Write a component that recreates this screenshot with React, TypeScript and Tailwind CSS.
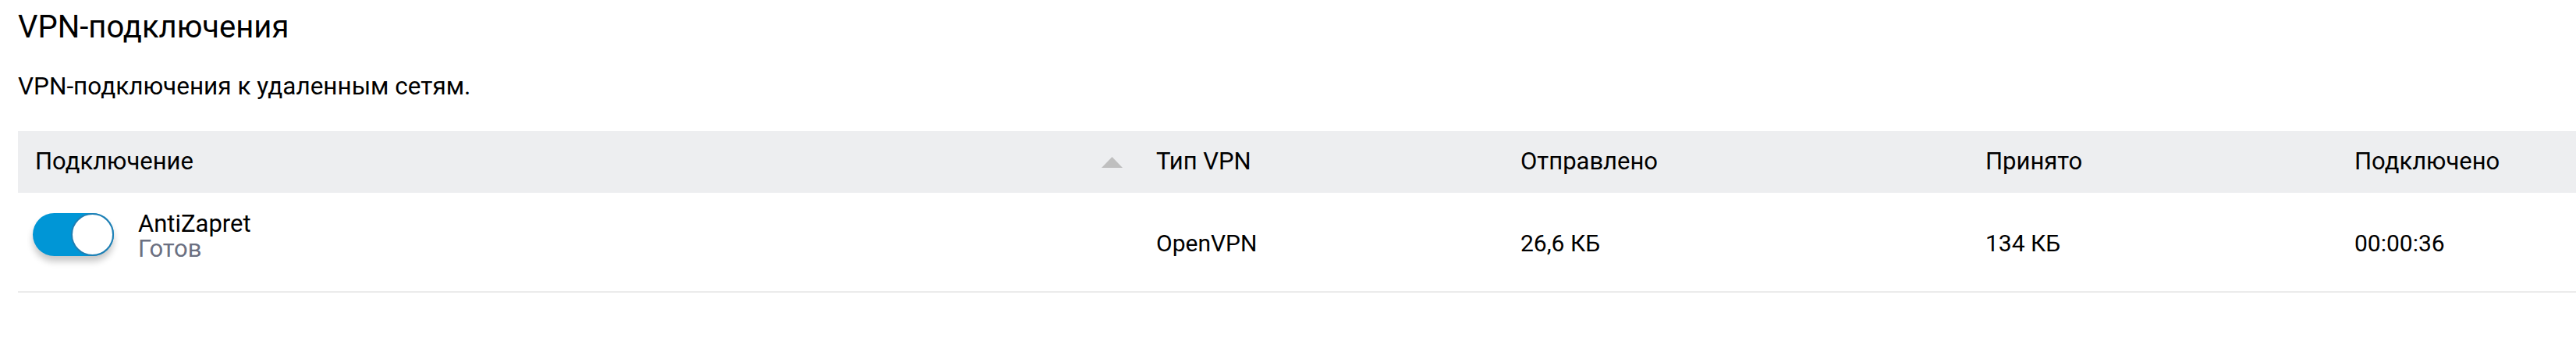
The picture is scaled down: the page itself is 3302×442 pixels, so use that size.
import React from "react";

interface VpnConnection {
  id: string;
  name: string;
  status: string;
  type: string;
  sent: string;
  received: string;
  uptime: string;
  enabled: boolean;
}

const connections: VpnConnection[] = [
  {
    id: "antizapret",
    name: "AntiZapret",
    status: "Готов",
    type: "OpenVPN",
    sent: "26,6 КБ",
    received: "134 КБ",
    uptime: "00:00:36",
    enabled: true,
  },
];

// ширины колонок таблицы
const cols = "grid grid-cols-[1437px_467px_596px_473px_1fr]";

function Toggle({ on }: { on: boolean }) {
  return (
    <div
      className={`flex h-[55px] w-[104px] shrink-0 rounded-full shadow-[0_7px_9px_rgba(0,0,0,0.22)] ${
        on ? "justify-end bg-[#0096d6]" : "justify-start bg-[#c7c9cc]"
      }`}
    >
      <div className="h-[55px] w-[55px] rounded-full border-2 border-[#1f7fb4] bg-white" />
    </div>
  );
}

export default function App() {
  return (
    <div className="min-h-[442px] w-full bg-white pl-[23px] pt-[11px] font-[Roboto,sans-serif] text-black">
      <h1 className="text-[40px] leading-[47px] font-normal">VPN-подключения</h1>
      <p className="mt-[35px] text-[31.5px] leading-[36px]">
        VPN-подключения к удаленным сетям.
      </p>

      <div className="mt-[39px]">
        {/* шапка */}
        <div className={`${cols} h-[79px] items-center bg-[#edeef0] text-[31px]`}>
          <div className="flex items-center justify-between pl-[22px] pr-[21px]">
            <span>Подключение</span>
            <svg width="27" height="14" viewBox="0 0 27 14">
              <polygon points="13.5,0 27,14 0,14" fill="#bfbfbf" />
            </svg>
          </div>
          <div className="pl-[22px]">Тип VPN</div>
          <div className="pl-[22px]">Отправлено</div>
          <div className="pl-[22px]">Принято</div>
          <div className="pl-[22px]">Подключено</div>
        </div>

        {connections.map((c) => (
          <div
            key={c.id}
            className={`${cols} h-[128px] border-b-2 border-[#ebebeb] text-[30px]`}
          >
            <div className="flex items-start gap-[31px] pl-[19px] pt-[26px]">
              <Toggle on={c.enabled} />
              <div className="-mt-[2px] text-[31px] leading-[32px]">
                <div>{c.name}</div>
                <div className="text-[#6b7081]">{c.status}</div>
              </div>
            </div>
            <div className="flex items-center pl-[22px] pt-[3px]">{c.type}</div>
            <div className="flex items-center pl-[22px] pt-[3px]">{c.sent}</div>
            <div className="flex items-center pl-[22px] pt-[3px]">{c.received}</div>
            <div className="flex items-center pl-[22px] pt-[3px]">{c.uptime}</div>
          </div>
        ))}
      </div>
    </div>
  );
}
